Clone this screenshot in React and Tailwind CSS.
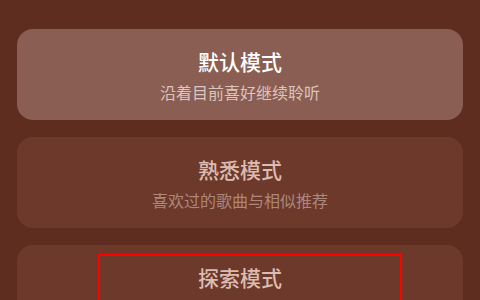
import React from 'react'

const modes = [
    { title: '默认模式', desc: '沿着目前喜好继续聆听', active: true },
    { title: '熟悉模式', desc: '喜欢过的歌曲与相似推荐' },
    { title: '探索模式', desc: '多元曲风与大众佳作', marked: true },
]

const ModeCard = ({ title, desc, active, marked }) => {
    return (
        <div
            className={
                active
                    ? 'relative h-[91px] shrink-0 rounded-[16px] bg-[#8a5e52] flex flex-col items-center pt-[17px]'
                    : 'relative h-[91px] shrink-0 rounded-[16px] bg-[#6c392b] flex flex-col items-center pt-[17px]'
            }
        >
            <div
                className={
                    active
                        ? 'text-[21px] leading-[30px] font-medium text-white'
                        : 'text-[21px] leading-[30px] font-medium text-[#dcbcb1]'
                }
            >
                {title}
            </div>
            <div
                className={
                    active
                        ? 'mt-[6px] text-[16px] leading-[20px] text-[#dcc4bd]'
                        : 'mt-[6px] text-[16px] leading-[20px] text-[#ae877b]'
                }
            >
                {desc}
            </div>
            {marked && (
                <div className="absolute left-[81px] top-[9px] w-[304px] h-[70px] border-2 border-[#ff0000]" />
            )}
        </div>
    )
}

const App = () => {
    return (
        <div
            className="w-[480px] h-[300px] overflow-hidden bg-[#5f2d1f] px-[17px] pt-[29px] flex flex-col gap-[17px]"
            style={{ fontFamily: '"Noto Sans CJK SC", "Noto Sans", sans-serif' }}
        >
            {modes.map((m) => (
                <ModeCard key={m.title} {...m} />
            ))}
        </div>
    )
}

export default App
